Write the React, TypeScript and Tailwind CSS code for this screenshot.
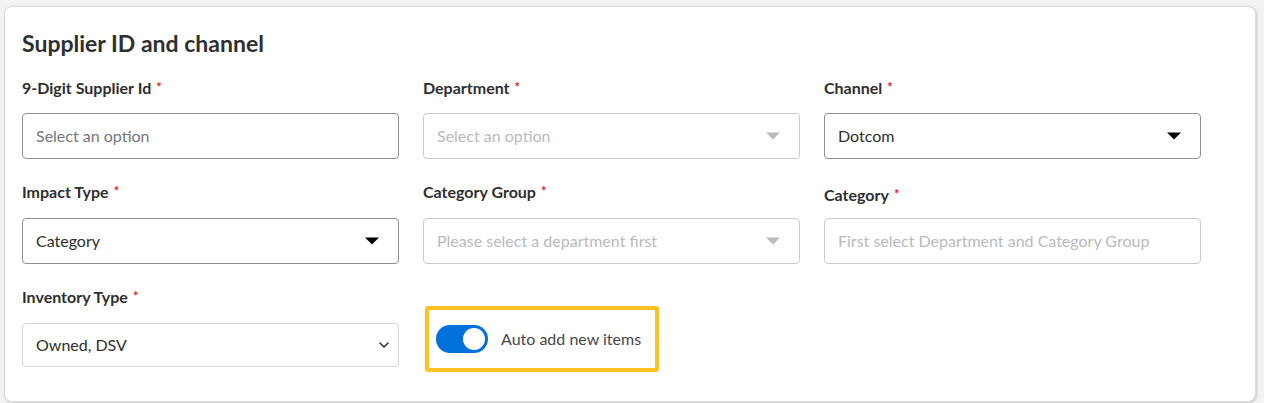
import type { ReactNode } from "react";

const font = "font-['Lato','Noto_Sans',sans-serif]";

function Label({ children, className = "" }: { children: ReactNode; className?: string }) {
  return (
    <div className={`flex h-5 items-center text-base font-bold leading-5 text-[#2e2f32] ${className}`}>
      {children}
      <span className="ml-[5px] -mt-[3px] text-[13px] font-bold text-[#de1c24]">*</span>
    </div>
  );
}

function Caret({ color }: { color: string }) {
  return (
    <svg width="14" height="8" viewBox="0 0 14 8" className="shrink-0">
      <path d="M0 0.5h14L7 7.5z" fill={color} />
    </svg>
  );
}

function Box({
  text,
  muted,
  disabled,
  caret,
  className = "",
}: {
  text: string;
  muted?: boolean;
  disabled?: boolean;
  caret?: string;
  className?: string;
}) {
  return (
    <div
      className={`flex h-[46px] items-center justify-between rounded-[4px] border pl-[13px] pr-[19px] text-base ${
        disabled ? "border-[#c9cacd]" : "border-[#909196]"
      } ${className}`}
    >
      <span className={disabled ? "text-[#b9babd]" : muted ? "text-[#74767c]" : "text-[#2e2f32]"}>{text}</span>
      {caret && <Caret color={caret} />}
    </div>
  );
}

export default function App() {
  return (
    <div className={`min-h-[403px] bg-[#f3f3f3] pl-[4px] pt-[6px] ${font}`}>
      <section className="w-[1252px] rounded-lg border border-[#dcdde0] bg-white pl-[17px] pt-[21px] pb-[29px] shadow-[1px_1px_3px_rgba(0,0,0,0.18)]">
        <h1 className="text-[23px] font-bold leading-[30px] text-[#2e2f32]">Supplier ID and channel</h1>

        <div className="mt-[20px] grid grid-cols-[377px_377px_377px] gap-x-6 gap-y-[23px]">
          <div>
            <Label>9-Digit Supplier Id</Label>
            <Box className="mt-[15px]" text="Select an option" muted />
          </div>
          <div>
            <Label>Department</Label>
            <Box className="mt-[15px]" text="Select an option" disabled caret="#b9babd" />
          </div>
          <div>
            <Label>Channel</Label>
            <Box className="mt-[15px]" text="Dotcom" caret="#000000" />
          </div>

          <div>
            <Label>Impact Type</Label>
            <Box className="mt-4" text="Category" caret="#000000" />
          </div>
          <div>
            <Label>Category Group</Label>
            <Box className="mt-4" text="Please select a department first" disabled caret="#b9babd" />
          </div>
          <div>
            <Label className="mt-[3px]">Category</Label>
            <Box className="mt-[13px]" text="First select Department and Category Group" disabled />
          </div>

          <div>
            <Label>Inventory Type</Label>
            <div className="mt-4 flex h-[44px] items-center justify-between rounded-[4px] border border-[#d6d7da] pl-[13px] pr-[9px] text-base text-[#2e2f32]">
              <span>Owned, DSV</span>
              <svg width="10" height="6" viewBox="0 0 10 6" fill="none">
                <path d="M1 1l4 4 4-4" stroke="#2e2f32" strokeWidth="1.5" strokeLinecap="round" strokeLinejoin="round" />
              </svg>
            </div>
          </div>
          <div>
            <div className="ml-[2px] mt-[19px] flex h-[66px] w-[234px] items-center rounded-[3px] border-4 border-[#ffc220] pl-[7px]">
              <div className="flex h-[28px] w-[52px] items-center justify-end rounded-full bg-[#0071dc] pr-[3px]">
                <div className="h-[22px] w-[22px] rounded-full bg-white" />
              </div>
              <span className="ml-[13px] text-base text-[#46474a]">Auto add new items</span>
            </div>
          </div>
          <div />
        </div>
      </section>
    </div>
  );
}
